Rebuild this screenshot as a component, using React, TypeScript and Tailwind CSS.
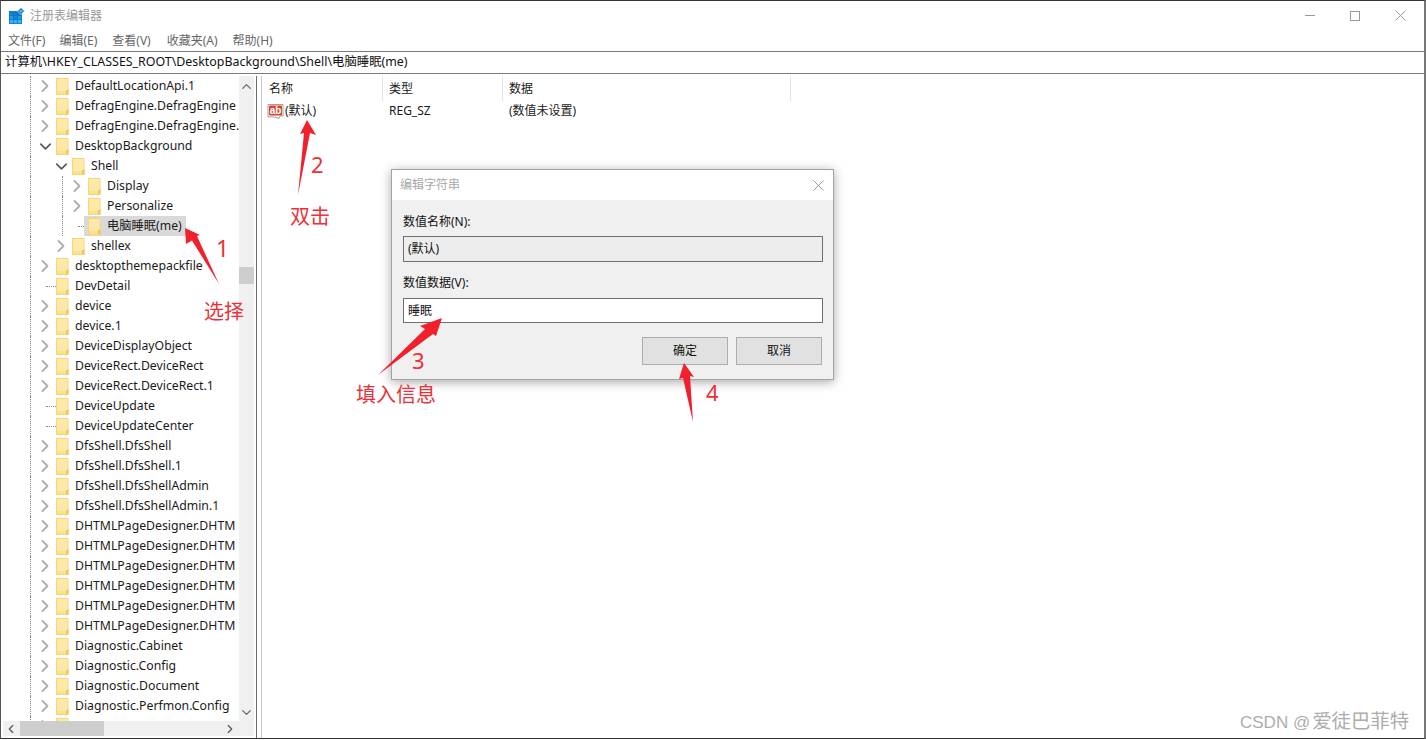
import React from 'react';
import { ChevronRight, ChevronDown, ChevronUp, ChevronLeft } from 'lucide-react';

const UI_FONT = "font-['Noto_Sans','Noto_Sans_CJK_SC',sans-serif]";

type TreeRow = { label: string; level?: number; open?: boolean; leaf?: boolean; selected?: boolean; guides?: number[] };

const TREE: TreeRow[] = [
  { label: 'DefaultLocationApi.1' },
  { label: 'DefragEngine.DefragEngine' },
  { label: 'DefragEngine.DefragEngine.' },
  { label: 'DesktopBackground', open: true },
  { label: 'Shell', level: 1, open: true, guides: [0, 2] },
  { label: 'Display', level: 2, guides: [0, 2, 3] },
  { label: 'Personalize', level: 2, guides: [0, 2, 3] },
  { label: '电脑睡眠(me)', level: 2, leaf: true, selected: true, guides: [0, 2, 3] },
  { label: 'shellex', level: 1, guides: [0, 2] },
  { label: 'desktopthemepackfile' },
  { label: 'DevDetail', leaf: true },
  { label: 'device' },
  { label: 'device.1' },
  { label: 'DeviceDisplayObject' },
  { label: 'DeviceRect.DeviceRect' },
  { label: 'DeviceRect.DeviceRect.1' },
  { label: 'DeviceUpdate', leaf: true },
  { label: 'DeviceUpdateCenter', leaf: true },
  { label: 'DfsShell.DfsShell' },
  { label: 'DfsShell.DfsShell.1' },
  { label: 'DfsShell.DfsShellAdmin' },
  { label: 'DfsShell.DfsShellAdmin.1' },
  { label: 'DHTMLPageDesigner.DHTM' },
  { label: 'DHTMLPageDesigner.DHTM' },
  { label: 'DHTMLPageDesigner.DHTM' },
  { label: 'DHTMLPageDesigner.DHTM' },
  { label: 'DHTMLPageDesigner.DHTM' },
  { label: 'DHTMLPageDesigner.DHTM' },
  { label: 'Diagnostic.Cabinet' },
  { label: 'Diagnostic.Config' },
  { label: 'Diagnostic.Document' },
  { label: 'Diagnostic.Perfmon.Config' },
  { label: '' },
];

const Folder = () => (
  <svg width="13" height="17" viewBox="0 0 13 17" className="shrink-0">
    <rect x="0.5" y="0.5" width="11.500" height="16" fill="#fde18a" stroke="#f5d47a" />
    <rect x="1" y="1" width="10.500" height="12" fill="#fee9a8" />
    <path d="M10 16.500V12.500l2.500-1.500v5.500z" fill="#f2c65a" />
  </svg>
);

const Row = ({ row }: { row: TreeRow }) => {
  const level = row.level ?? 0;
  const guides = row.guides ?? [0, 1];
  const slots = [0, 1, 2, 3].slice(0, level + 1);
  return (
    <div className="flex h-5 shrink-0 items-center pl-[29px]">
      {slots.map((i) => (
        <span key={i} className={`h-5 w-4 shrink-0 ${guides.includes(i) ? 'border-l border-dotted border-[#888]' : ''}`} />
      ))}
      {row.leaf ? (
        <span className={`h-0 shrink-0 border-t border-dotted border-[#888] ${row.selected ? 'w-[6px]' : 'w-[10px]'}`} />
      ) : (
        <span className="relative -ml-[8px] flex h-[14px] w-[14px] shrink-0 items-center justify-center bg-white">
          {row.open ? (
            <ChevronDown size={19} strokeWidth={2} className="shrink-0 text-[#555]" />
          ) : (
            <ChevronRight size={20} strokeWidth={2.200} className="shrink-0 text-[#adadad]" />
          )}
        </span>
      )}
      <span className={`flex h-5 items-center ${row.leaf ? '' : 'ml-[4px]'} ${row.selected ? 'bg-[#d9d9d9] pr-1 pl-[4px]' : ''}`}>
        <Folder />
        {row.label && <span className="ml-[6px] whitespace-nowrap">{row.label}</span>}
      </span>
    </div>
  );
};

const RegIcon = () => (
  <svg width="17" height="17" viewBox="0 0 17 17" className="shrink-0">
    <path d="M1 1.500h15v11.500c-2-.8-3-.3-4 2.500-2.500-1.600-6.500-1.800-11-1.500z" fill="#fff" stroke="#a0a0a0" />
    <rect x="2" y="2.500" width="13" height="10" rx="1" fill="#d9432f" />
    <text x="8.500" y="11" textAnchor="middle" fontSize="10" fontWeight="700" letterSpacing="-0.2" fill="#fff" fontFamily="Liberation Sans, sans-serif">ab</text>
  </svg>
);

const AppIcon = () => (
  <svg width="17" height="16" viewBox="0 0 17 16" className="shrink-0">
    <rect x="1" y="3" width="13" height="13" fill="#0a78c6" />
    <rect x="1.800" y="3.800" width="3.300" height="3.300" fill="#1388d0" />
    <rect x="5.900" y="3.800" width="3.300" height="3.300" fill="#0f80c8" />
    <rect x="1.800" y="7.900" width="3.300" height="3.300" fill="#1f9ee6" />
    <rect x="5.900" y="7.900" width="3.300" height="3.300" fill="#1388d0" />
    <rect x="10" y="7.900" width="3.300" height="3.300" fill="#1f9ee6" />
    <rect x="1.800" y="12" width="3.300" height="3.300" fill="#38b6f5" />
    <rect x="5.900" y="12" width="3.300" height="3.300" fill="#38b6f5" />
    <rect x="10" y="12" width="3.300" height="3.300" fill="#38b6f5" />
    <path d="M13 -0.500l3.500 3.500-3.500 3.500-3.500-3.500z" fill="#1a86cc" stroke="#fff" strokeWidth="0.600" />
    <rect x="12.200" y="2.200" width="1.600" height="1.600" fill="#8fd0f5" />
  </svg>
);

const Annotations = () => (
  <svg width="1426" height="740" viewBox="0 0 1426 740" className="pointer-events-none absolute top-0 left-0" fill="#f0212d">
    <path d="M185 228l1 16 6-3.500 27 43.500-22-48 3-1z" />
    <path d="M307 120l-7 14 4-1-6 62 12-62 6 2z" />
    <path d="M442 318l-22 8 5 3-47 46 55-41 3 2z" />
    <path d="M684 363l-5 16 4-1 10 44-3-46 4 1z" />
  </svg>
);

const Mark = ({ children, className }: { children: React.ReactNode; className: string }) => (
  <span className={`absolute whitespace-nowrap leading-none text-[#ee2f38] ${className}`}>{children}</span>
);

const Dialog = () => (
  <div className="absolute top-[169px] left-[391px] flex h-[211px] w-[443px] flex-col border border-[#a3a3a3] bg-[#f0f0f0] shadow-[0_2px_10px_rgba(0,0,0,0.35)]">
    <div className="flex h-[30px] shrink-0 items-center justify-between bg-white pr-[9px] pl-[8px] text-[12px] text-[#a8a8a8]">
      <span>编辑字符串</span>
      <svg width="11" height="11" viewBox="0 0 11 11" stroke="#999" fill="none"><path d="M0.500 0.500l10 10M10.500 0.500l-10 10" /></svg>
    </div>
    <div className="flex flex-col pr-[10px] pl-[11px] text-[12px] text-[#111]">
      <div className="mt-[13px] h-[17px] leading-[17px]">数值名称(N):</div>
      <div className="mt-[6px] flex h-[26px] items-center border border-[#6f6f6f] bg-[#ededed] px-[4px]">(默认)</div>
      <div className="mt-[12px] h-[17px] leading-[17px]">数值数据(V):</div>
      <div className="mt-[7px] flex h-[25px] items-center border border-[#6f6f6f] bg-white px-[4px]">睡眠</div>
      <div className="mt-[14px] flex justify-end gap-2 pr-px">
        <button className="h-[28px] w-[86px] border border-[#adadad] bg-[#e1e1e1]">确定</button>
        <button className="h-[28px] w-[86px] border border-[#adadad] bg-[#e1e1e1]">取消</button>
      </div>
    </div>
  </div>
);

const App: React.FC = () => {
  return (
    <div className={`relative flex h-[740px] w-[1426px] flex-col overflow-hidden bg-white text-[12.250px] text-[#1a1a1a] ${UI_FONT}`}>
      <div className="flex h-[739px] flex-col border-t border-r-2 border-b border-l border-t-[#333] border-r-[#777] border-b-[#333] border-l-[#555]">
        {/* Title bar */}
        <header className="flex h-[29px] shrink-0 items-center pr-[18px] pl-[7px]">
          <AppIcon />
          <span className="ml-[5px] text-[12px] text-[#999]">注册表编辑器</span>
          <div className="ml-auto flex items-center gap-[35px]">
            <span className="h-px w-[10px] bg-[#999]" />
            <span className="h-[10px] w-[10px] border border-[#999]" />
            <svg width="11" height="11" viewBox="0 0 11 11" stroke="#999" fill="none"><path d="M0.500 0.500l10 10M10.500 0.500l-10 10" /></svg>
          </div>
        </header>

        {/* Menu */}
        <nav className="flex h-[21px] shrink-0 items-center pl-[7px] text-[12px] text-[#666]">
          <span>文件(F)</span>
          <span className="ml-[14px]">编辑(E)</span>
          <span className="ml-[15px]">查看(V)</span>
          <span className="ml-[16px]">收藏夹(A)</span>
          <span className="ml-[15px]">帮助(H)</span>
        </nav>

        {/* Address */}
        <div className="flex h-[23px] shrink-0 items-center border-y border-y-[#7a7a7a] pl-[4px] text-[12.400px] text-[#111]">
          计算机\HKEY_CLASSES_ROOT\DesktopBackground\Shell\电脑睡眠(me)
        </div>

        <main className="mt-[2px] flex min-h-0 flex-1">
          {/* Tree */}
          <aside className="flex w-[256px] shrink-0 flex-col border-r border-r-[#6d6d6d]">
            <div className="flex min-h-0 flex-1">
              <div className="flex min-w-0 flex-1 flex-col overflow-hidden">
                {TREE.map((row, i) => (
                  <Row key={i} row={row} />
                ))}
              </div>
              <div className="mr-[2px] flex w-[15px] shrink-0 flex-col items-center bg-[#f0f0f0]">
                <ChevronUp size={15} strokeWidth={2} className="mt-[3px] text-[#666]" />
                <span className="mt-[173px] h-[17px] w-full shrink-0 bg-[#cdcdcd]" />
                <ChevronDown size={15} strokeWidth={2} className="mt-auto mb-[1px] text-[#666]" />
              </div>
            </div>
            <div className="mr-[2px] mb-[2px] ml-[2px] flex h-[15px] shrink-0 items-center bg-[#f0f0f0]">
              <ChevronLeft size={14} strokeWidth={2} className="ml-[1px] text-[#555]" />
              <span className="ml-[2px] h-full w-[84px] bg-[#cdcdcd]" />
              <ChevronRight size={14} strokeWidth={2} className="mr-[17px] ml-auto text-[#555]" />
            </div>
          </aside>

          {/* Values */}
          <section className="ml-[4px] flex min-w-0 flex-1 flex-col border-l border-l-[#c8c8c8]">
            <div className="flex h-[25px] shrink-0 items-center text-[12px]">
              <span className="flex h-full w-[121px] items-center border-r border-r-[#e5e5e5] pl-[7px]">名称</span>
              <span className="flex h-full w-[120px] items-center border-r border-r-[#e5e5e5] pl-[6px]">类型</span>
              <span className="flex h-full w-[288px] items-center border-r border-r-[#e5e5e5] pl-[6px]">数据</span>
            </div>
            <div className="flex h-5 items-center text-[12px]">
              <div className="flex w-[121px] items-center pl-[5px]">
                <RegIcon />
                <span className="ml-px">(默认)</span>
              </div>
              <span className="w-[120px] pl-[6px]">REG_SZ</span>
              <span className="pl-[6px]">(数值未设置)</span>
            </div>
          </section>
        </main>
      </div>

      <Dialog />
      <Annotations />

      <Mark className="top-[237px] left-[216px] text-[23px]">1</Mark>
      <Mark className="top-[153px] left-[311px] text-[22px]">2</Mark>
      <Mark className="top-[349px] left-[412px] text-[22px]">3</Mark>
      <Mark className="top-[381px] left-[706px] text-[22px]">4</Mark>
      <Mark className="top-[302px] left-[204px] text-[20px]">选择</Mark>
      <Mark className="top-[207px] left-[290px] text-[20px]">双击</Mark>
      <Mark className="top-[385px] left-[356px] text-[20px]">填入信息</Mark>
      <span className="absolute top-[711px] left-[1240px] whitespace-nowrap font-['Liberation_Sans','Noto_Sans_CJK_SC',sans-serif] text-[17px] leading-[20px] text-[#adadad]">
        CSDN @<span className="ml-[2px] text-[19.400px]">爱徒巴菲特</span>
      </span>
    </div>
  );
};

export default App;
